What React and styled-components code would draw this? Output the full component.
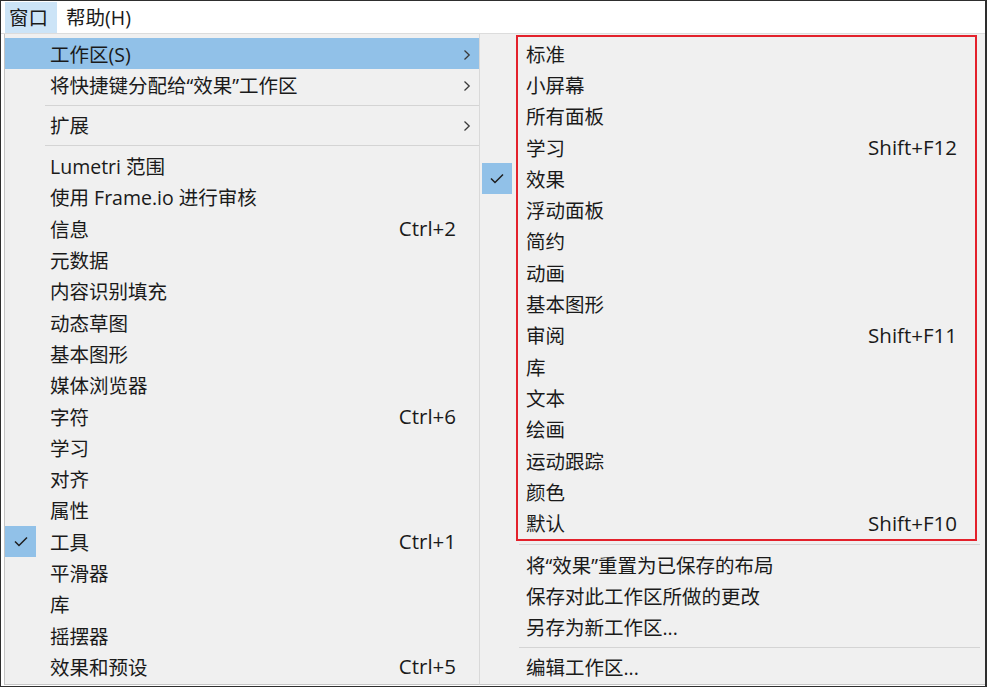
import React from "react";
import styled, { createGlobalStyle } from "styled-components";

const Global = createGlobalStyle`
  html, body { margin: 0; padding: 0; background: #fff; }
  body { font-family: "Open Sans", "Noto Sans CJK SC", sans-serif; }
`;

const Frame = styled.div`
  width: 987px;
  height: 687px;
  box-sizing: border-box;
  border: 1px solid #2e2e2e;
  border-right-width: 2px;
  background: #fff;
  display: flex;
  flex-direction: column;
  color: #1a1a1a;
  font-size: 19.5px;
  overflow: hidden;
`;

const MenuBar = styled.div`
  height: 32px;
  flex: none;
  display: flex;
  align-items: flex-end;
  padding-left: 4px;
  border-bottom: 1px solid #dcdcdc;
`;

const BarItem = styled.div`
  height: 29px;
  display: flex;
  align-items: center;
  padding: 0 ${(p) => (p.$active ? "9px" : "10px")} 2px ${(p) => (p.$active ? "4px" : "9px")};
  background: ${(p) => (p.$active ? "#cce4f7" : "transparent")};
`;

const Body = styled.div`
  flex: 1;
  display: flex;
  padding: 0 0 1px 3px;
  min-height: 0;
`;

const Menu = styled.div`
  position: relative;
  box-sizing: border-box;
  background: #f0f0f0;
  padding: 4px ${(p) => p.$padR || 0}px 0 ${(p) => p.$padL || 0}px;
  border-bottom: 1px solid #c6c6c6;
  ${(p) => (p.$width ? `width: ${p.$width}px; flex: none;` : "flex: 1;")}
  ${(p) => (p.$borderLeft ? "border-left: 1px solid #c4c4c4;" : "")}
  ${(p) => (p.$borderRight ? "border-right: 1px solid #d9d9d9;" : "")}
`;

const Row = styled.div`
  height: 31.3px;
  display: flex;
  align-items: center;
  background: ${(p) => (p.$active ? "#91c1e8" : "transparent")};
  white-space: nowrap;
`;

const CheckCell = styled.div`
  width: ${(p) => p.$w}px;
  height: 100%;
  flex: none;
  display: flex;
  align-items: center;
  justify-content: center;
  background: ${(p) => (p.$checked ? "#91c1e8" : "transparent")};
`;

const Label = styled.span`
  flex: 1;
  margin-left: 14px;
  padding-bottom: 1px;
`;

const Shortcut = styled.span`
  font-size: 20.5px;
  padding-bottom: 1px;
`;

const ArrowCell = styled.div`
  width: 23px;
  flex: none;
  display: flex;
  align-items: center;
  padding: 2px 0 0 7px;
  box-sizing: border-box;
`;

const Separator = styled.div`
  height: ${(p) => p.$h}px;
  display: flex;
  align-items: center;
  padding-left: ${(p) => p.$indent}px;
  &::after {
    content: "";
    flex: 1;
    height: 1px;
    background: #d4d4d4;
  }
`;

const Highlight = styled.div`
  position: absolute;
  left: 36px;
  top: 1px;
  width: 461px;
  height: 506px;
  box-sizing: border-box;
  border: 2px solid #e3212b;
  pointer-events: none;
`;

const Chevron = () => (
  <svg width="8" height="12" viewBox="0 0 8 12">
    <path d="M1.5 1.5 L6.2 6 L1.5 10.5" fill="none" stroke="#3a3a3a" strokeWidth="1.3" />
  </svg>
);

const Check = () => (
  <svg width="14" height="11" viewBox="0 0 14 11">
    <path d="M1 5.5 L5 9.5 L13 1.5" fill="none" stroke="#1e1e1e" strokeWidth="1.5" />
  </svg>
);

const leftItems = [
  { label: "工作区(S)", arrow: true, active: true },
  { label: "将快捷键分配给“效果”工作区", arrow: true },
  { sep: 9 },
  { label: "扩展", arrow: true },
  { sep: 9.6 },
  { label: "Lumetri 范围" },
  { label: "使用 Frame.io 进行审核" },
  { label: "信息", sc: "Ctrl+2" },
  { label: "元数据" },
  { label: "内容识别填充" },
  { label: "动态草图" },
  { label: "基本图形" },
  { label: "媒体浏览器" },
  { label: "字符", sc: "Ctrl+6" },
  { label: "学习" },
  { label: "对齐" },
  { label: "属性" },
  { label: "工具", sc: "Ctrl+1", checked: true },
  { label: "平滑器" },
  { label: "库" },
  { label: "摇摆器" },
  { label: "效果和预设", sc: "Ctrl+5" },
];

const rightItems = [
  { label: "标准" },
  { label: "小屏幕" },
  { label: "所有面板" },
  { label: "学习", sc: "Shift+F12" },
  { label: "效果", checked: true },
  { label: "浮动面板" },
  { label: "简约" },
  { label: "动画" },
  { label: "基本图形" },
  { label: "审阅", sc: "Shift+F11" },
  { label: "库" },
  { label: "文本" },
  { label: "绘画" },
  { label: "运动跟踪" },
  { label: "颜色" },
  { label: "默认", sc: "Shift+F10" },
  { sep: 10.5 },
  { label: "将“效果”重置为已保存的布局" },
  { label: "保存对此工作区所做的更改" },
  { label: "另存为新工作区..." },
  { sep: 8.7 },
  { label: "编辑工作区..." },
];

const MenuList = ({ items, checkW, indent }) =>
  items.map((it, i) =>
    it.sep ? (
      <Separator key={i} $h={it.sep} $indent={indent} />
    ) : (
      <Row key={i} $active={it.active}>
        <CheckCell $w={checkW} $checked={it.checked}>
          {it.checked && <Check />}
        </CheckCell>
        <Label>{it.label}</Label>
        {it.sc && <Shortcut>{it.sc}</Shortcut>}
        <ArrowCell>{it.arrow && <Chevron />}</ArrowCell>
      </Row>
    )
  );

export default function App() {
  return (
    <>
      <Global />
      <Frame>
        <MenuBar>
          <BarItem $active>窗口</BarItem>
          <BarItem>帮助(H)</BarItem>
        </MenuBar>
        <Body>
          <Menu $width={476} $borderLeft $borderRight>
            <MenuList items={leftItems} checkW={31} indent={40} />
          </Menu>
          <Menu $padL={2} $padR={5}>
            <MenuList items={rightItems} checkW={30} indent={37} />
            <Highlight />
          </Menu>
        </Body>
      </Frame>
    </>
  );
}
